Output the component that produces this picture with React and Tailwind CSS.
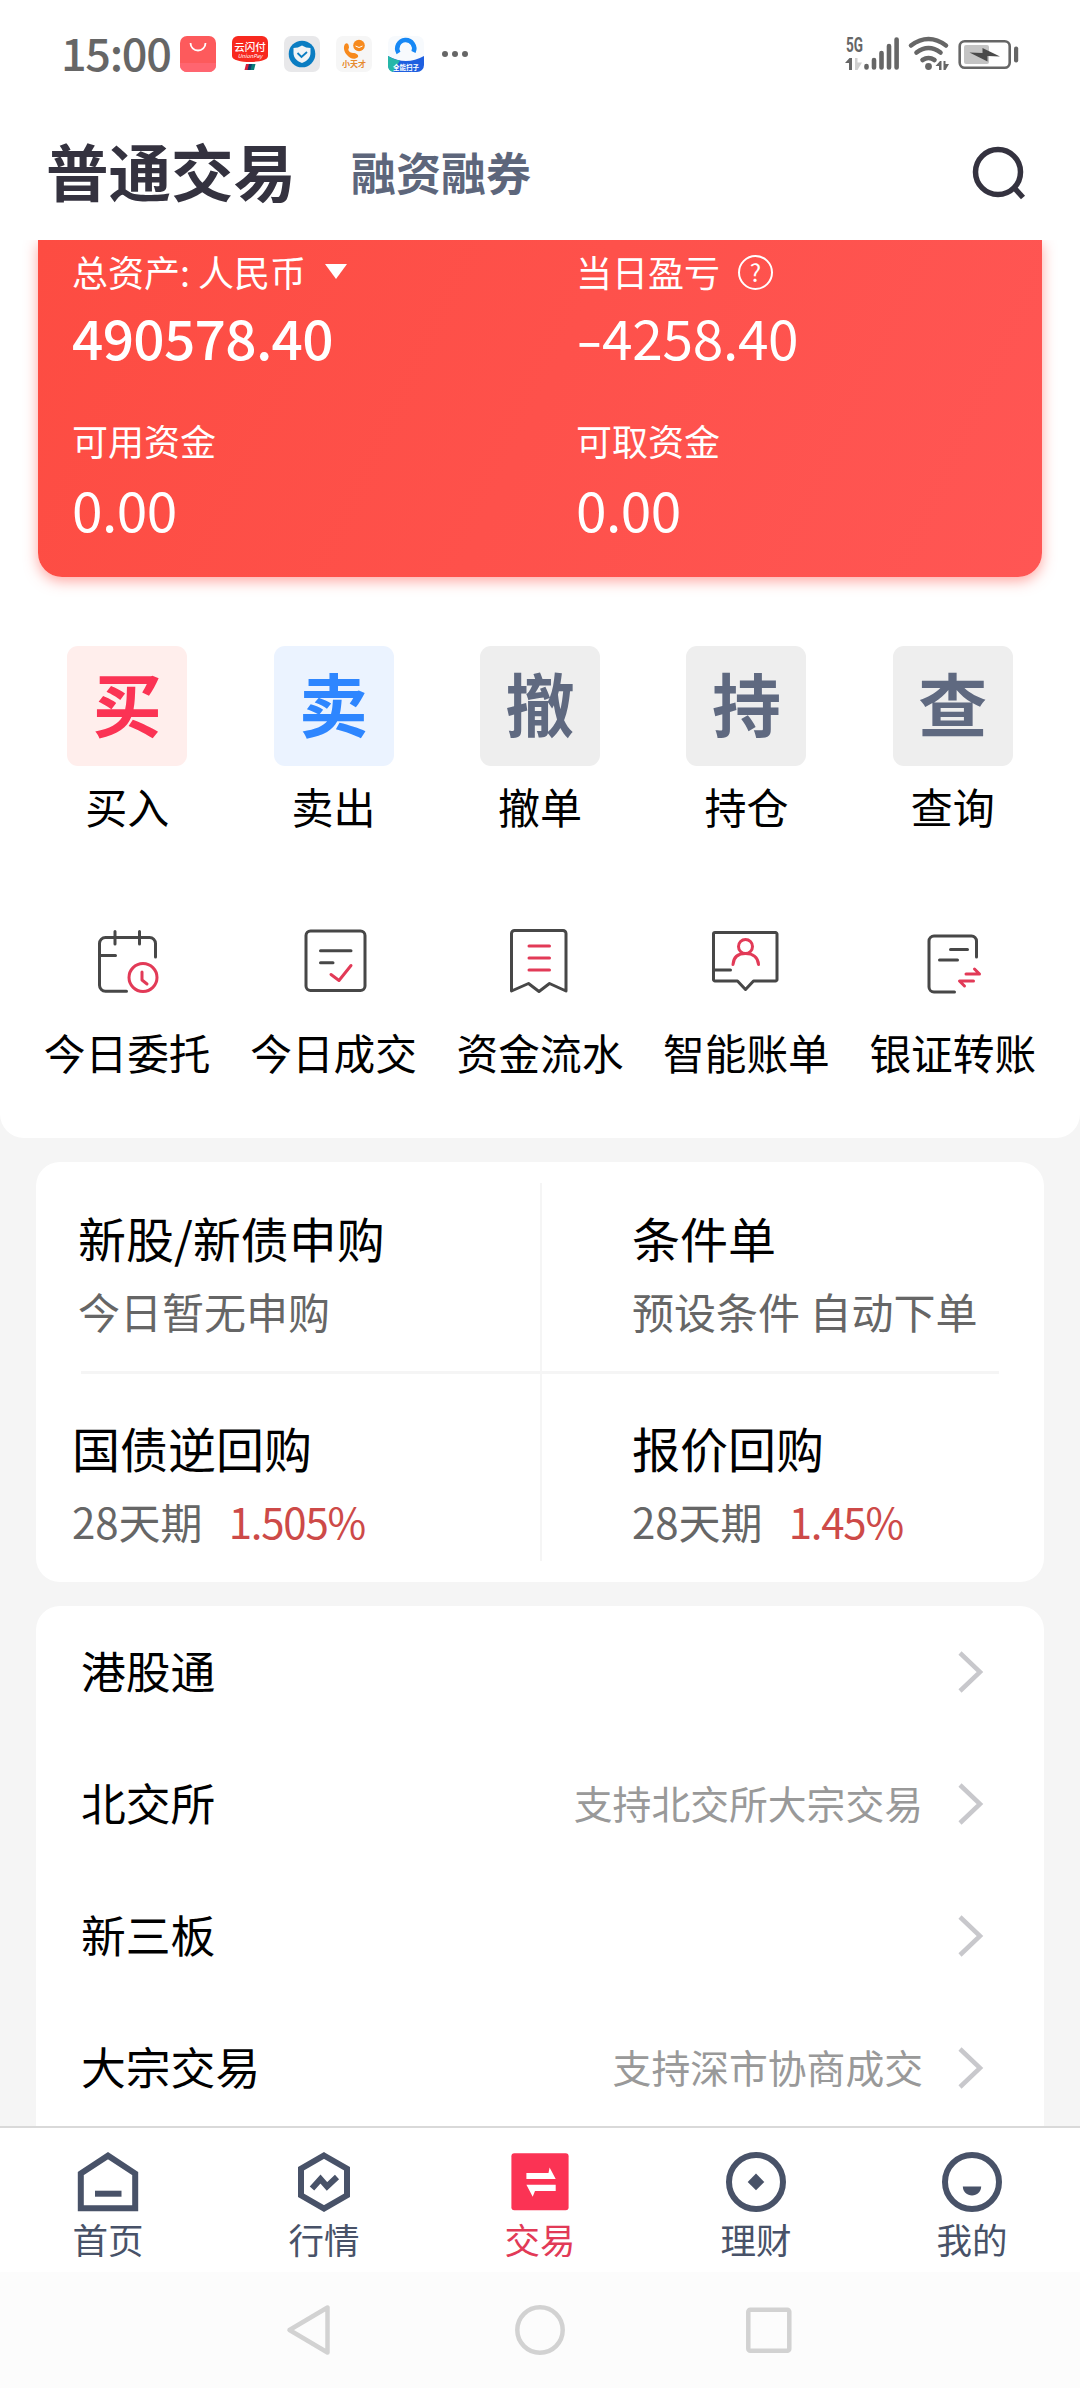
const GRAY = "#474747";
const RED = "#e23a57";
const NAVY = "#485268";

const shortcuts = [
  { glyph: "买", label: "买入", tile: "bg-[#ffeeec] text-[#fb3354]" },
  { glyph: "卖", label: "卖出", tile: "bg-[#ebf3ff] text-[#2e86ff]" },
  { glyph: "撤", label: "撤单", tile: "bg-[#eeeeee] text-[#5f6980]" },
  { glyph: "持", label: "持仓", tile: "bg-[#eeeeee] text-[#5f6980]" },
  { glyph: "查", label: "查询", tile: "bg-[#eeeeee] text-[#5f6980]" },
];

const tools = [
  { icon: <CalendarIcon />, label: "今日委托" },
  { icon: <DealIcon />, label: "今日成交" },
  { icon: <FlowIcon />, label: "资金流水" },
  { icon: <BillIcon />, label: "智能账单" },
  { icon: <TransferIcon />, label: "银证转账" },
];

const rows = [
  { title: "港股通" },
  { title: "北交所", note: "支持北交所大宗交易" },
  { title: "新三板" },
  { title: "大宗交易", note: "支持深市协商成交" },
];

const tabs = [
  { icon: <HomeIcon />, label: "首页" },
  { icon: <MarketIcon />, label: "行情" },
  { icon: <TradeIcon />, label: "交易", active: true },
  { icon: <WealthIcon />, label: "理财" },
  { icon: <MineIcon />, label: "我的" },
];

function ToolSvg({ children }) {
  return (
    <svg
      width="72"
      height="72"
      viewBox="0 0 72 72"
      fill="none"
      stroke={GRAY}
      strokeWidth="3"
      strokeLinecap="round"
      strokeLinejoin="round"
    >
      {children}
    </svg>
  );
}

function CalendarIcon() {
  return (
    <ToolSvg>
      <path d="M35.5 66.300H14.500a6 6 0 0 1-6-6V18.500a6 6 0 0 1 6-6H58.500a6 6 0 0 1 6 6V32" />
      <path d="M24 6.500V19M48.500 6.500V19M8.500 30.500H24.500" />
      <g stroke={RED}>
        <circle cx="52" cy="52.500" r="14" />
        <path d="M51 47v8l5 4" />
      </g>
    </ToolSvg>
  );
}

function DealIcon() {
  return (
    <ToolSvg>
      <rect x="8" y="6" width="59" height="59.500" rx="4.500" />
      <path d="M22.500 25.700H53M22.500 37.800H35" />
      <path d="M33 49.500l8 6L53 40.500" stroke={RED} />
    </ToolSvg>
  );
}

function FlowIcon() {
  return (
    <ToolSvg>
      <path d="M7.500 66V8.500a3 3 0 0 1 3-3H59a3 3 0 0 1 3 3V66L45.500 58.500 35 66.500 24.500 58.500z" />
      <path d="M25 21H45.500M25 33H45.500M25 45H45.500" stroke={RED} />
    </ToolSvg>
  );
}

function BillIcon() {
  return (
    <ToolSvg>
      <path d="M5 7.600H65.500a1.500 1.500 0 0 1 1.500 1.500V54.500a1.500 1.500 0 0 1-1.500 1.500H43.500L35.500 64.500 27.500 56H5a1.500 1.500 0 0 1-1.500-1.500V9.100a1.500 1.500 0 0 1 1.500-1.500z" />
      <path d="M3.500 45H20.500" />
      <g stroke={RED}>
        <circle cx="35.500" cy="21.500" r="7" />
        <path d="M23 39.500C23.500 32 28.500 28.500 35.500 28.500S48 32 48.500 39.500" />
      </g>
    </ToolSvg>
  );
}

function TransferIcon() {
  return (
    <ToolSvg>
      <path d="M37.500 67H17a5 5 0 0 1-5-5V16a5 5 0 0 1 5-5H54.500a5 5 0 0 1 5 5V32" />
      <path d="M33.500 24.500H50.500M22.500 35H40.500" />
      <path d="M49 49H62.500l-5-5M56.500 56H42.500l5 5" stroke={RED} />
    </ToolSvg>
  );
}

function TabSvg({ children }) {
  return (
    <svg width="64" height="64" viewBox="0 0 64 64" fill="none" stroke={NAVY} strokeWidth="6">
      {children}
    </svg>
  );
}

function HomeIcon() {
  return (
    <TabSvg>
      <path d="M4.800 23.500L32 5.700 59.200 23.500V58.300H4.800z" />
      <path d="M19 43.700H45.500" />
    </TabSvg>
  );
}

function MarketIcon() {
  return (
    <TabSvg>
      <path d="M32 5.500L55 18.700V45.300L32 58.500 9 45.300V18.700z" />
      <path d="M20 38.500L28.500 29 35 36.500 45 27" />
    </TabSvg>
  );
}

function TradeIcon() {
  return (
    <svg width="64" height="64" viewBox="0 0 64 64" fill="#fff">
      <rect x="3.400" y="3.300" width="57.200" height="57" rx="3" fill="#fb3354" />
      <path d="M18.400 23H40.500L41.600 17.500 47.700 29H18.400z" />
      <path d="M47.700 34.700V41H27L24.700 46.700 18.400 34.700z" />
    </svg>
  );
}

function WealthIcon() {
  return (
    <TabSvg>
      <circle cx="32" cy="32" r="27" />
      <path d="M32 23.500L40.300 32 32 40.300 23.700 32z" fill={NAVY} stroke="none" />
    </TabSvg>
  );
}

function MineIcon() {
  return (
    <TabSvg>
      <circle cx="32" cy="32" r="27" />
      <path d="M22.800 36.500H41.200C41 42 37 45.500 32 45.500S23 42 22.800 36.500z" fill={NAVY} stroke="none" />
    </TabSvg>
  );
}

function AppIcons() {
  return (
    <div className="flex items-center gap-4">
      <svg width="36" height="36" viewBox="0 0 36 36">
        <rect width="36" height="36" rx="7" fill="#fd5a5c" />
        <path d="M0 27H36V29a7 7 0 0 1-7 7H7a7 7 0 0 1-7-7z" fill="#ff6570" />
        <path d="M10.500 7a7.500 7.500 0 0 0 15 0" fill="none" stroke="#fff" strokeWidth="1.800" />
      </svg>
      <svg width="36" height="36" viewBox="0 0 36 36">
        <path d="M6 0H30a6 6 0 0 1 6 6V20c0 4-9 6-18 6S0 24 0 20V6a6 6 0 0 1 6-6z" fill="#f8291f" />
        <text x="18" y="15" textAnchor="middle" fontSize="10.500" fontWeight="500" fill="#fff">云闪付</text>
        <text x="18" y="22" textAnchor="middle" fontSize="5.500" fontStyle="italic" fill="#fff">UnionPay</text>
        <path d="M14 28h4l-1.500 6H12.500z" fill="#d81e3a" />
        <path d="M17 28h4l-1.500 6H15.500z" fill="#123a6b" />
        <path d="M20 28h3.500L22 34H18.500z" fill="#0a7c78" />
      </svg>
      <svg width="36" height="36" viewBox="0 0 36 36">
        <rect width="36" height="36" rx="7" fill="#e8e8ea" />
        <circle cx="18" cy="18" r="13.300" fill="#0b7dc2" />
        <path d="M18 9.500q4 2.500 8.500 2.500v5c0 5-4 8.500-8.500 10-4.500-1.500-8.500-5-8.500-10v-5q4.500 0 8.500-2.500z" fill="#f2f4f6" />
        <path d="M13.500 17l4 4 5.500-5" fill="none" stroke="#0b7dc2" strokeWidth="1.800" />
      </svg>
      <svg width="36" height="36" viewBox="0 0 36 36">
        <rect width="36" height="36" rx="7" fill="#f6f6f6" />
        <path d="M9 8c3-2 4 1 4 4-2 2 1 5 4 5 3 0 6 2 5 4-3 3-8 2-11-2-3-3-4-8-2-11z" fill="#f78a1d" />
        <circle cx="23" cy="9.500" r="5.800" fill="#f78a1d" />
        <path d="M19.500 10q3.500 3 7 0" fill="none" stroke="#fff" />
        <text x="18" y="31" textAnchor="middle" fontSize="8" fontWeight="700" fill="#e68a2e">小天才</text>
      </svg>
      <svg width="36" height="36" viewBox="0 0 36 36">
        <rect width="36" height="36" rx="7" fill="#f7fafd" />
        <path d="M0 20q18 10 36 0v9a7 7 0 0 1-7 7H7a7 7 0 0 1-7-7z" fill="#1e5fe0" />
        <path d="M0 20q7 4 12 4.500L5 36a7 7 0 0 1-5-7z" fill="#26b7a8" />
        <path d="M10.500 17A8.500 8.500 0 1 1 25.500 16" fill="none" stroke="#1688f5" strokeWidth="4.500" />
        <text x="18" y="33.500" textAnchor="middle" fontSize="6.500" fontWeight="700" fill="#fff">全能扫子</text>
      </svg>
    </div>
  );
}

function StatusIcons() {
  return (
    <svg className="overflow-visible" width="176" height="40" viewBox="0 0 176 40" fill="#666">
      <text
        className="font-[Roboto,sans-serif]"
        x="1"
        y="18"
        fontSize="21"
        fontWeight="700"
        textLength="17"
        lengthAdjust="spacingAndGlyphs"
      >
        5G
      </text>
      <path d="M0 29L4.500 24H7V36H4V29z" />
      <path d="M10 24H12.500V28.500H17L12.500 36H10z" fill="#d0d0d0" />
      <g stroke="#666" strokeWidth="4.600" strokeLinecap="round" fill="none">
        <path d="M21.500 32v1.500M29 26V33.500M36.500 19V33.500M44 12V33.500M51.600 5.500V33.500" />
        <path d="M66 11.500Q83.500 -1.500 101 11.500M71.500 18.500Q83.500 9.500 95.500 18.500M77.500 26Q83.500 22 89.500 26" />
      </g>
      <circle cx="83.500" cy="32.500" r="3.400" />
      <path d="M90.500 32L95 27H96.500V36H94V32zM98.500 27H100.500V30H104L100.500 36H98.500z" />
      <rect x="114.700" y="7.200" width="50" height="26.500" rx="5" fill="none" stroke="#666" strokeWidth="2.600" />
      <rect x="119" y="11" width="25" height="19" rx="2" fill="#c4c4c4" />
      <path d="M124.500 18.500L137.500 19V14L155 22.500 142.500 22V27.500z" fill="#4a4a4a" />
      <rect x="169" y="12.500" width="4.200" height="16" rx="2" />
    </svg>
  );
}

function StatusBar() {
  return (
    <div className="flex h-[108px] items-center pl-[61px] pr-[59px]">
      <span className="w-[119px] pb-[6px] text-[45px] leading-none font-medium tracking-[-1.300px] text-[#666]">15:00</span>
      <AppIcons />
      <div className="ml-[18px] flex gap-1">
        {[1, 2, 3].map((i) => (
          <span key={i} className="size-1.5 rounded-full bg-[#666]" />
        ))}
      </div>
      <div className="ml-auto">
        <StatusIcons />
      </div>
    </div>
  );
}

function Header() {
  return (
    <div className="flex h-[132px] items-center px-[46px]">
      <h1 className="pb-[7px] text-[62.500px] font-bold leading-none text-[#34323f]">普通交易</h1>
      <span className="ml-[55px] pb-[5px] text-[45px] font-bold leading-none text-[#5d667b]">融资融券</span>
      <svg
        className="ml-auto mr-[8px]"
        width="56"
        height="56"
        viewBox="0 0 56 56"
        fill="none"
        stroke="#34323f"
        strokeWidth="5.500"
      >
        <circle cx="28" cy="26" r="22.500" />
        <path d="M43.500 41L53 51.500" />
      </svg>
    </div>
  );
}

function Asset({ label, extra, className = "", children }) {
  return (
    <div className="flex flex-col">
      <div className="flex h-[48px] items-center text-[36px] leading-none">
        {label}
        {extra}
      </div>
      <div className={`h-[56px] text-[55px] leading-[56px] ${className}`}>{children}</div>
    </div>
  );
}

function AssetCard() {
  return (
    <div className="h-[360px] overflow-hidden px-[38px]">
      <div className="grid h-[337px] grid-cols-[504px_1fr] grid-rows-[169px_1fr] rounded-b-[24px] bg-linear-[115deg] from-[#fd4c42] to-[#ff5654] pl-[34px] pt-[7px] text-white shadow-[0_4px_14px_rgba(255,80,70,0.5)]">
        <Asset
          label="总资产: 人民币"
          className="mt-[13px] font-medium tracking-[-0.700px]"
          extra={
            <svg className="ml-[19px]" width="22" height="15" viewBox="0 0 22 15" fill="#fff">
              <path d="M0 0H22L11 15z" />
            </svg>
          }
        >
          490578.40
        </Asset>
        <Asset
          label="当日盈亏"
          className="mt-[13px] tracking-[-0.300px]"
          extra={
            <span className="ml-[18px] mt-[2px] flex size-[35px] items-center justify-center rounded-full border-2 border-white text-[24px] leading-none">
              ?
            </span>
          }
        >
          <span className="inline-block w-[26px] origin-left scale-x-140">-</span>4258.40
        </Asset>
        <Asset label="可用资金" className="mt-[16px] tracking-[-0.500px]">
          0.00
        </Asset>
        <Asset label="可取资金" className="mt-[16px] tracking-[-0.500px]">
          0.00
        </Asset>
      </div>
    </div>
  );
}

function Promo({ title, className, children }) {
  return (
    <div className={className}>
      <div className="text-[48px] leading-[56px] text-black">{title}</div>
      <div className="mt-[19px] text-[42px] leading-[54px] text-[#666]">{children}</div>
    </div>
  );
}

function Rate({ children }) {
  return <span className="ml-[26px] tracking-[-1.200px] text-[#cd4a48]">{children}</span>;
}

function PromoCard() {
  return (
    <div className="relative mx-9 mt-6 grid h-[420px] grid-cols-2 grid-rows-[210px_210px] rounded-[24px] bg-white">
      <Promo className="pl-[42px] pt-[47px]" title="新股/新债申购">
        今日暂无申购
      </Promo>
      <Promo className="pl-[92px] pt-[47px]" title="条件单">
        预设条件 自动下单
      </Promo>
      <Promo className="pl-[36px] pt-[47px]" title="国债逆回购">
        28天期<Rate>1.505%</Rate>
      </Promo>
      <Promo className="pl-[92px] pt-[47px]" title="报价回购">
        28天期<Rate>1.45%</Rate>
      </Promo>
      {/* cross dividers */}
      <div className="absolute left-[45px] right-[45px] top-[209px] h-[3px] bg-[#f5f5f5]" />
      <div className="absolute bottom-[21px] left-[504px] top-[21px] w-[2px] bg-[#f5f5f5]" />
    </div>
  );
}

export default function App() {
  return (
    <div className="flex h-[2388px] w-[1080px] flex-col overflow-hidden bg-[#f5f5f5] font-['Noto_Sans_CJK_SC',sans-serif] text-black">
      <div className="h-[1138px] shrink-0 rounded-b-[24px] bg-white">
        <StatusBar />
        <Header />
        <AssetCard />

        <div className="mt-[46px] grid grid-cols-5 px-6">
          {shortcuts.map((s) => (
            <div key={s.label} className="flex flex-col items-center">
              <div
                className={`flex size-[120px] items-center justify-center rounded-[11px] pb-[7px] text-[69px] font-bold leading-none ${s.tile}`}
              >
                {s.glyph}
              </div>
              <div className="mt-[16px] text-[42px] leading-[48px]">{s.label}</div>
            </div>
          ))}
        </div>

        <div className="mt-[95px] grid grid-cols-5 px-6">
          {tools.map((t) => (
            <div key={t.label} className="flex flex-col items-center">
              {t.icon}
              <div className="mt-[31px] whitespace-nowrap text-[41.700px] leading-[48px]">{t.label}</div>
            </div>
          ))}
        </div>
      </div>

      <PromoCard />

      <div className="mx-9 mt-6 min-h-0 flex-1 overflow-hidden rounded-t-[24px] bg-white">
        {rows.map((r) => (
          <div key={r.title} className="flex h-[132px] items-center pl-[45px] pr-[60px]">
            <span className="pb-[3px] text-[44.800px] leading-none">{r.title}</span>
            <span className="ml-auto mr-[34px] pb-[3px] text-[38.800px] leading-none text-[#999]">{r.note}</span>
            <svg width="27" height="44" viewBox="0 0 27 44" fill="none" stroke="#c8c8cc" strokeWidth="4.500">
              <path d="M3 3L23 22 3 41" />
            </svg>
          </div>
        ))}
      </div>

      <nav className="grid h-[146px] shrink-0 grid-cols-5 border-t-2 border-[#d9d9d9] bg-white pt-[22px]">
        {tabs.map((t) => (
          <div key={t.label} className={`flex flex-col items-center ${t.active ? "text-[#e23a57]" : "text-[#485268]"}`}>
            {t.icon}
            <span className="mt-[5px] text-[35.500px] leading-[40px]">{t.label}</span>
          </div>
        ))}
      </nav>

      {/* system navigation */}
      <div className="flex h-[116px] shrink-0 items-center justify-center bg-[#fcfcfc]">
        <svg width="520" height="56" viewBox="0 0 520 56" fill="none" stroke="#d2d2d2" strokeWidth="4.500" strokeLinejoin="round">
          <path d="M47.500 5.500V50.500L9.500 28z" />
          <circle cx="260" cy="28" r="22.700" />
          <rect x="468.300" y="7.700" width="41" height="41" rx="2" />
        </svg>
      </div>
    </div>
  );
}
